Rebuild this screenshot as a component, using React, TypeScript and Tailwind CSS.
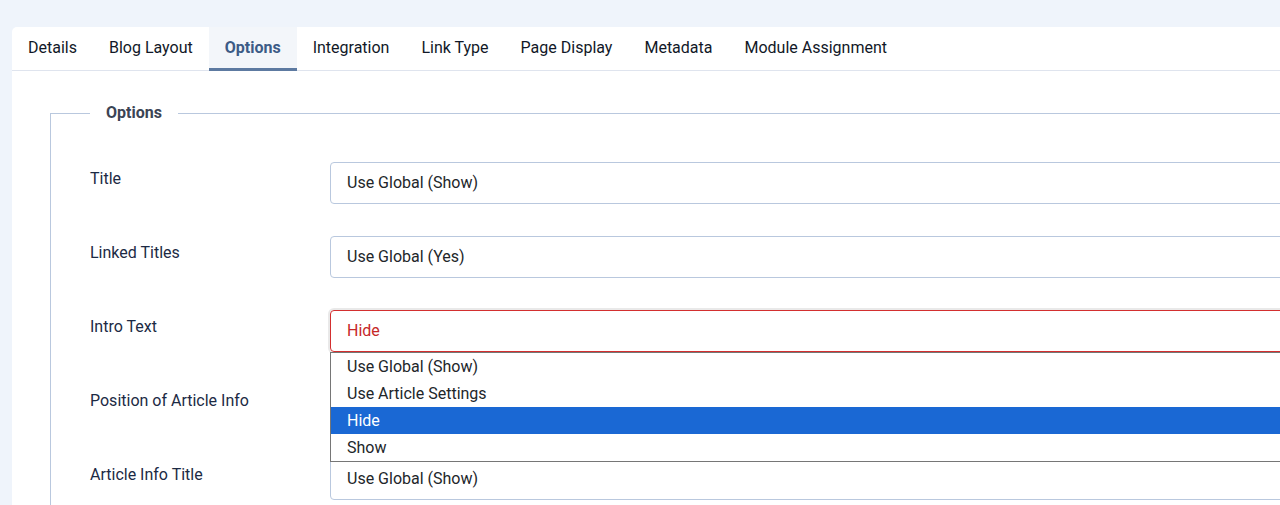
import React from 'react';

const tabs = ['Details', 'Blog Layout', 'Options', 'Integration', 'Link Type', 'Page Display', 'Metadata', 'Module Assignment'];

const rows = [
  { label: 'Title', value: 'Use Global (Show)' },
  { label: 'Linked Titles', value: 'Use Global (Yes)' },
  { label: 'Intro Text', value: 'Hide', open: true },
  { label: 'Position of Article Info', value: '' },
  { label: 'Article Info Title', value: 'Use Global (Show)' },
];

const options = ['Use Global (Show)', 'Use Article Settings', 'Hide', 'Show'];

const App: React.FC = () => {
  return (
    <div className="w-[1280px] h-[505px] overflow-hidden bg-[#eff4fb] pt-[27px] pl-[12px] font-['Roboto',sans-serif] text-[16px]">
      <div className="w-[1400px] h-[600px] bg-white rounded-tl-[5px]">
        {/* Tabs */}
        <div className="flex h-[44px] border-b border-[#dfe4ee]">
          {tabs.map(t =>
            t === 'Options' ? (
              <div key={t} className="px-4 flex items-center bg-[#f3f6fa] text-[#3c5b86] font-bold border-b-[3px] border-[#5d7aa1] pt-[1px] mb-[-1px]">
                {t}
              </div>
            ) : (
              <div key={t} className="px-4 flex items-center pb-[2px] text-[#111827]">
                {t}
              </div>
            )
          )}
        </div>

        {/* Fieldset */}
        <div className="pl-[38px] pt-[30px]">
          <fieldset className="border border-[#b9c8de] border-r-0 pl-[39px] pb-10">
            <legend className="px-4 font-bold text-[#3b4454] leading-[24px]">Options</legend>
            <div className="pt-[37px] flex flex-col gap-[32px]">
              {rows.map(r => (
                <div key={r.label} className="flex items-start">
                  <div className="w-[240px] pt-[5px] leading-[24px] text-[#1c2a44]">{r.label}</div>
                  <div className="flex-1 relative">
                    {r.open ? (
                      <>
                        <div className="h-[42px] border border-[#d32f2f] rounded-[4px] ring-2 ring-[#e9e9e9] flex items-center pl-4 text-[#c62828]">
                          {r.value}
                        </div>
                        <div className="absolute left-0 right-0 top-[42px] z-10 bg-white border border-[#767676] border-r-0 text-[#22262a]">
                          {options.map(o => (
                            <div
                              key={o}
                              className={
                                o === 'Hide'
                                  ? 'h-[27px] leading-[27px] pl-4 bg-[#1a68d4] text-white'
                                  : 'h-[27px] leading-[27px] pl-4'
                              }
                            >
                              {o}
                            </div>
                          ))}
                        </div>
                      </>
                    ) : (
                      <div className="h-[42px] border border-[#b9c8de] rounded-[4px] flex items-center pl-4 text-[#22262a]">
                        {r.value}
                      </div>
                    )}
                  </div>
                </div>
              ))}
            </div>
          </fieldset>
        </div>
      </div>
    </div>
  );
};

export default App;
